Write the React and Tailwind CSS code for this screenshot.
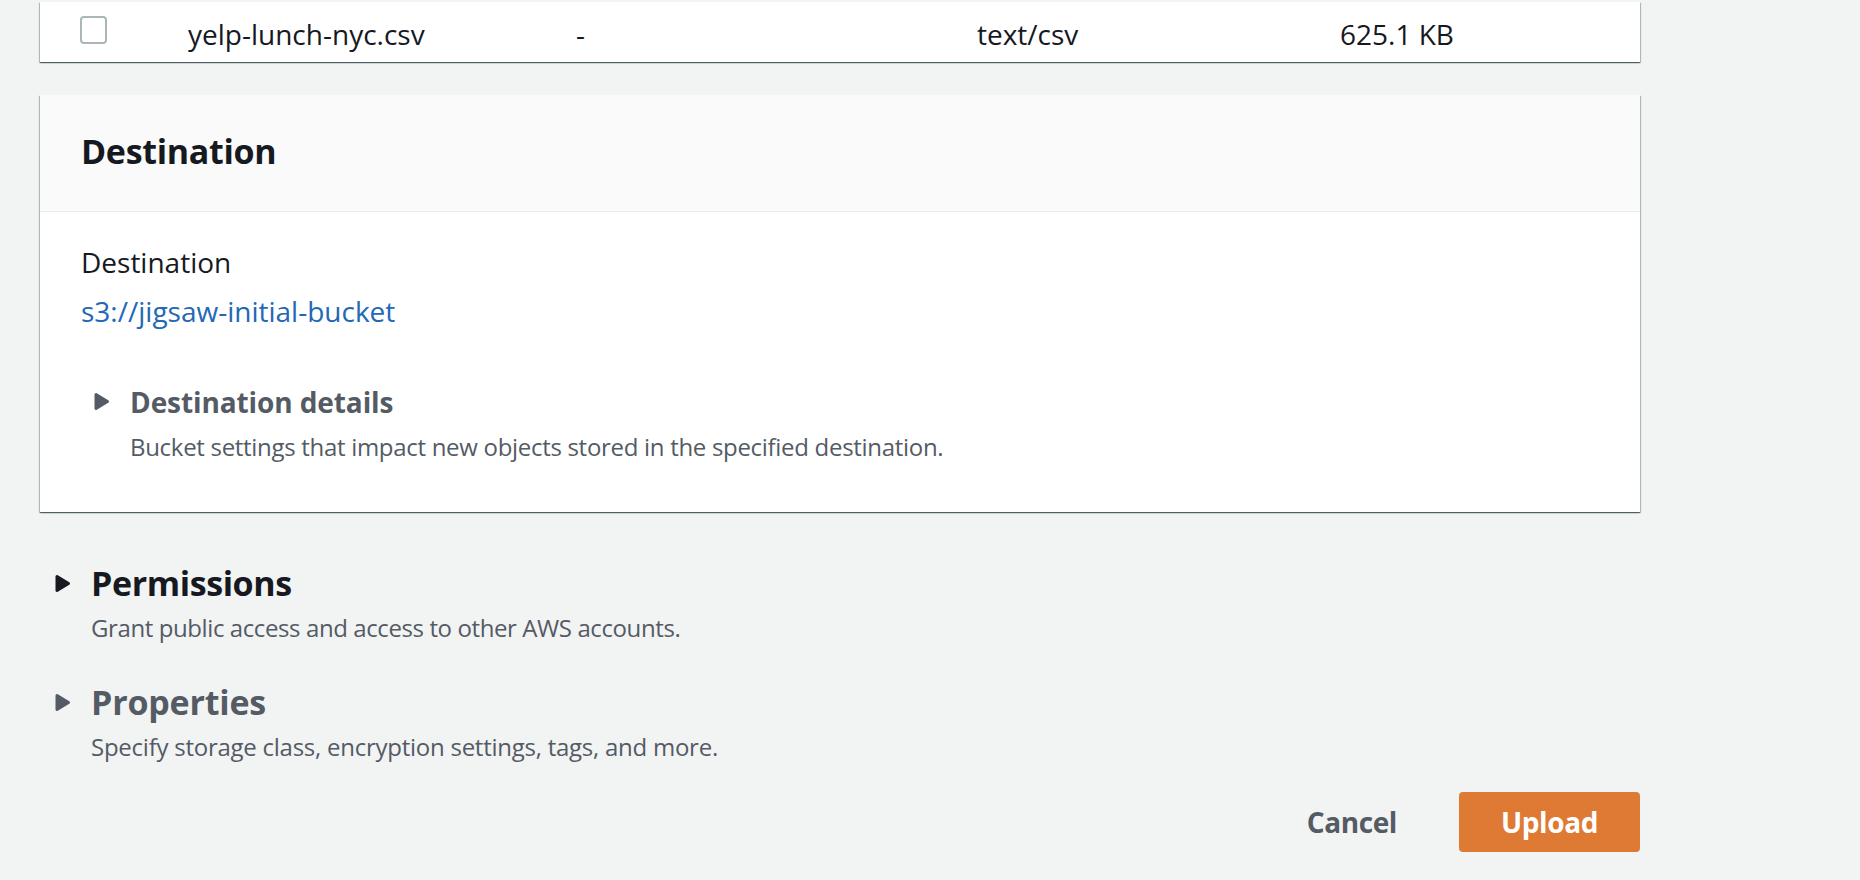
import React from "react";

const cardShadow =
  "shadow-[0_1px_1px_0_rgba(0,28,36,0.5),1px_1px_1px_0_rgba(0,28,36,0.2),-1px_1px_1px_0_rgba(0,28,36,0.2)]";

const Caret = ({ color }) => (
  <svg width="17" height="19" viewBox="0 0 17 19" className="shrink-0">
    <path
      d="M3 2.5 L14.5 9.5 L3 16.5 Z"
      fill={color}
      stroke={color}
      strokeWidth="3"
      strokeLinejoin="round"
    />
  </svg>
);

const App = () => {
  return (
    <main
      className="min-h-[880px] bg-[#f2f3f3] pt-[2px] pl-[40px] text-[#16191f]"
      style={{ fontFamily: '"Open Sans", "Noto Sans", sans-serif' }}
    >
      <div className="w-[1600px]">
        {/* file row */}
        <div className={`bg-white ${cardShadow} pt-[12px] pb-[8px] pl-[40px]`}>
          <div className="flex items-start text-[28px] leading-[40px]">
            <div className="w-[108px] pt-[2px]">
              <div className="w-[27px] h-[28px] rounded-[4px] border-2 border-[#aab7b8] bg-white" />
            </div>
            <div className="w-[388px]">yelp-lunch-nyc.csv</div>
            <div className="w-[401px]">-</div>
            <div className="w-[363px]">text/csv</div>
            <div>625.1 KB</div>
          </div>
        </div>

        {/* destination card */}
        <section className={`mt-[33px] bg-white ${cardShadow}`}>
          <div className="bg-[#fafafa] border-b border-[#eaeded] pl-[41px] pt-[33px] pb-[37px]">
            <h2 className="text-[34px] leading-[46px] font-bold tracking-[-0.3px]">Destination</h2>
          </div>
          <div className="pl-[41px] pt-[30px] pb-[49px]">
            <div className="text-[28px] leading-[40px]">Destination</div>
            <a href="#" className="block mt-[9px] text-[28px] leading-[40px] text-[#2268b6]">
              s3://jigsaw-initial-bucket
            </a>
            <div className="mt-[51px] flex items-start gap-[20px] pl-[12px]">
              <div className="pt-[10px]">
                <Caret color="#545b64" />
              </div>
              <div>
                <div className="text-[28px] leading-[40px] font-bold text-[#545b64] tracking-[-0.1px]">
                  Destination details
                </div>
                <div className="mt-[9px] text-[24px] leading-[32px] text-[#545b64] tracking-[-0.3px]">
                  Bucket settings that impact new objects stored in the specified destination.
                </div>
              </div>
            </div>
          </div>
        </section>

        {/* permissions */}
        <div className="mt-[48px] flex items-start gap-[20px] pl-[14px]">
          <div className="pt-[14px]">
            <Caret color="#16191f" />
          </div>
          <div>
            <h2 className="text-[34px] leading-[46px] font-bold tracking-[-0.4px]">Permissions</h2>
            <p className="mt-[6px] text-[24px] leading-[32px] text-[#545b64] tracking-[-0.4px]">
              Grant public access and access to other AWS accounts.
            </p>
          </div>
        </div>

        {/* properties */}
        <div className="mt-[35px] flex items-start gap-[20px] pl-[14px]">
          <div className="pt-[14px]">
            <Caret color="#545b64" />
          </div>
          <div>
            <h2 className="text-[34px] leading-[46px] font-bold tracking-[-0.2px] text-[#545b64]">
              Properties
            </h2>
            <p className="mt-[6px] text-[24px] leading-[32px] text-[#545b64] tracking-[-0.25px]">
              Specify storage class, encryption settings, tags, and more.
            </p>
          </div>
        </div>

        {/* actions */}
        <div className="mt-[29px] flex items-center justify-end gap-[62px]">
          <button className="text-[28px] font-bold text-[#545b64] tracking-[-0.4px]">Cancel</button>
          <button className="w-[181px] h-[60px] rounded-[4px] bg-[#de7a34] text-white text-[28px] font-bold tracking-[-0.4px]">
            Upload
          </button>
        </div>
      </div>
    </main>
  );
};

export default App;
